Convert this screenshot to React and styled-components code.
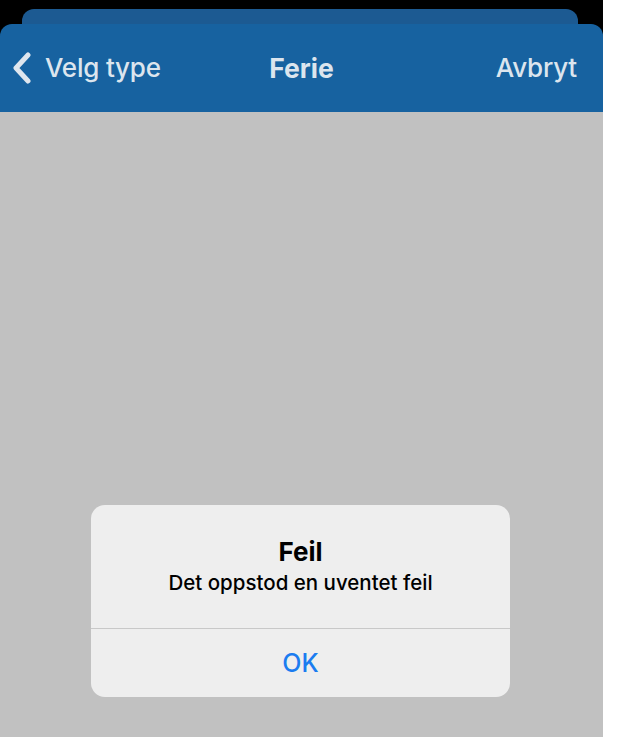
import styled, { createGlobalStyle } from "styled-components";

const GlobalStyle = createGlobalStyle`
  html, body {
    margin: 0;
    padding: 0;
    background: #ffffff;
  }
  body {
    font-family: Inter, "Liberation Sans", Arial, sans-serif;
  }
`;

const App = () => {
  return (
    <>
      <GlobalStyle />
      <Screen>
        <BackSheet />
        <NavBar>
          <NavLeft>
            <svg width="20" height="32" viewBox="0 0 20 32" fill="none">
              <polyline
                points="16,3 4,16 16,29"
                stroke="#dfe6ee"
                strokeWidth="5"
                strokeLinecap="round"
                strokeLinejoin="round"
              />
            </svg>
            <NavText>Velg type</NavText>
          </NavLeft>
          <NavTitle>Ferie</NavTitle>
          <NavRight>
            <NavText>Avbryt</NavText>
          </NavRight>
        </NavBar>
        <Body>
          <Alert>
            <AlertContent>
              <AlertTitle>Feil</AlertTitle>
              <AlertMessage>Det oppstod en uventet feil</AlertMessage>
            </AlertContent>
            <AlertButton>OK</AlertButton>
          </Alert>
        </Body>
      </Screen>
    </>
  );
};

const Screen = styled.div`
  width: 603px;
  height: 737px;
  background: #000000;
  display: flex;
  flex-direction: column;
  overflow: hidden;
`;

const BackSheet = styled.div`
  flex: none;
  height: 15px;
  width: 556px;
  margin: 9px 0 0 22px;
  background: #1c5a92;
  border-radius: 12px 12px 0 0;
`;

const NavBar = styled.header`
  flex: none;
  height: 88px;
  background: #1762a0;
  border-radius: 12px 12px 0 0;
  display: grid;
  grid-template-columns: 1fr auto 1fr;
  align-items: center;
  color: #dce5ee;
`;

const NavLeft = styled.div`
  display: flex;
  align-items: center;
  gap: 13px;
  padding-left: 12px;
`;

const NavRight = styled.div`
  display: flex;
  justify-content: flex-end;
  padding-right: 26px;
`;

const NavText = styled.span`
  font-size: 26px;
  line-height: 32px;
  font-weight: 500;
  letter-spacing: -0.2px;
`;

const NavTitle = styled.span`
  font-size: 26.5px;
  line-height: 32px;
  font-weight: 700;
`;

const Body = styled.main`
  flex: 1;
  background: #c1c1c1;
  display: flex;
  flex-direction: column;
  align-items: center;
  justify-content: flex-end;
  padding-bottom: 40px;
`;

const Alert = styled.div`
  width: 419px;
  margin-right: 2px;
  background: #eeeeee;
  border-radius: 14px;
  display: flex;
  flex-direction: column;
  overflow: hidden;
`;

const AlertContent = styled.div`
  height: 124px;
  box-sizing: border-box;
  padding-top: 31px;
  text-align: center;
  color: #000000;
  border-bottom: 1px solid #c8c8c8;
`;

const AlertTitle = styled.div`
  font-size: 26px;
  line-height: 32px;
  font-weight: 700;
`;

const AlertMessage = styled.div`
  margin-top: 1px;
  font-size: 20.5px;
  line-height: 28px;
  font-weight: 500;
`;

const AlertButton = styled.button`
  height: 68px;
  border: none;
  background: transparent;
  font-family: inherit;
  font-size: 25px;
  font-weight: 500;
  color: #1b7cf0;
  cursor: pointer;
`;

export default App;
